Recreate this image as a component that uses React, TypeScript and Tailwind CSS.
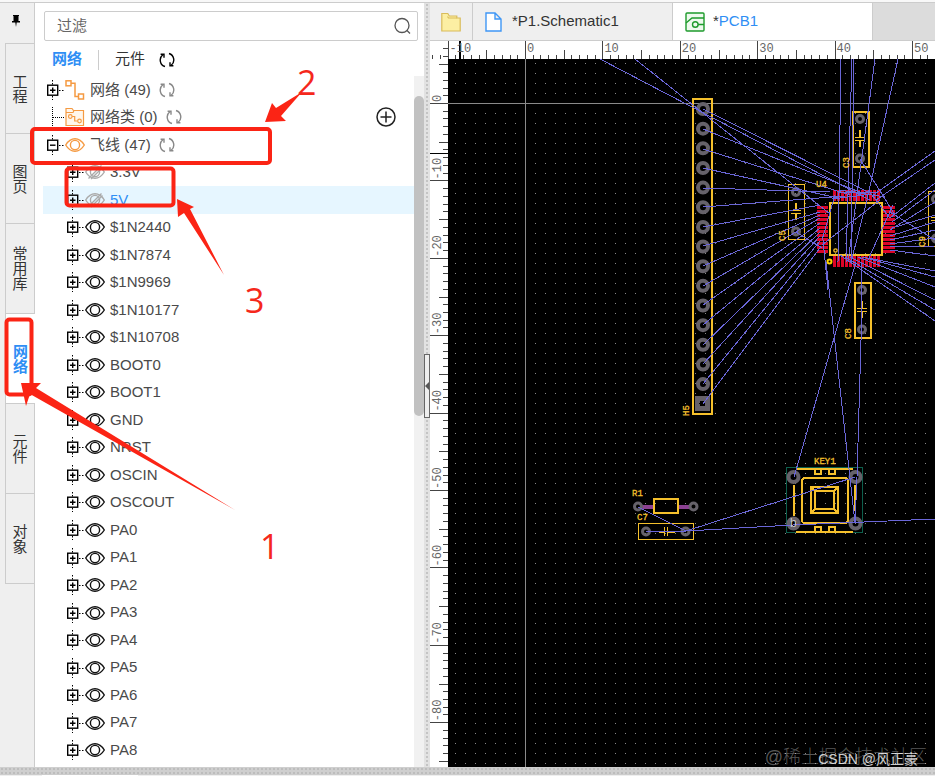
import { useState } from 'react';
import { clsx } from 'clsx';

type NodeIcon = 'net' | 'netClass' | 'ratline' | 'shown' | 'hidden';

interface TreeNode {
  label: string;
  icon: NodeIcon;
  level: 1 | 2;
  expander: 'plus' | 'minus' | 'none';
  refresh?: boolean;
  add?: boolean;
}

const SIDE_TABS = ['工程', '图页', '常用库', '网络', '元件', '对象'];

const HIDDEN_NETS = ['3.3V', '5V'];

const NETS = [
  '3.3V', '5V', '$1N2440', '$1N7874', '$1N9969', '$1N10177', '$1N10708',
  'BOOT0', 'BOOT1', 'GND', 'NRST', 'OSCIN', 'OSCOUT',
  'PA0', 'PA1', 'PA2', 'PA3', 'PA4', 'PA5', 'PA6', 'PA7', 'PA8',
];

const NODES: TreeNode[] = [
  { label: '网络 (49)', icon: 'net', level: 1, expander: 'plus', refresh: true },
  { label: '网络类 (0)', icon: 'netClass', level: 1, expander: 'none', refresh: true, add: true },
  { label: '飞线 (47)', icon: 'ratline', level: 1, expander: 'minus', refresh: true },
  ...NETS.map((label): TreeNode => ({
    label,
    icon: HIDDEN_NETS.includes(label) ? 'hidden' : 'shown',
    level: 2,
    expander: 'plus',
  })),
];

export default function App() {
  return (
    <div className="relative flex h-screen flex-col overflow-hidden bg-white font-['Liberation_Sans','Noto_Sans_CJK_SC',sans-serif] text-[15px] text-[#4a4a4a]">
      <div className="h-[3px] shrink-0 border-b border-[#ccc] bg-[#f8f8f8]" />
      <main className="flex min-h-0 flex-1">
        <SideTabs />
        <NetPanel />
        <Splitter />
        <Editor />
      </main>
      <div className="h-[7px] shrink-0 bg-[#cfcfcf] bg-[radial-gradient(#bdbdbd_1px,transparent_1px)] bg-[size:4px_4px]" />
      <div className="flex h-0.5 shrink-0 border-t border-[#ccc] bg-[#eee]">
        <div className="ml-[42px] w-24 bg-white" />
      </div>
      <Annotations />
    </div>
  );
}

// ---------------------------------------------------------------------------
// Left side
// ---------------------------------------------------------------------------

function SideTabs() {
  const [active, setActive] = useState('网络');

  return (
    <nav className="flex w-[35px] shrink-0 flex-col border-r border-[#ccc] bg-[#efefef] text-[#333]">
      <button type="button" aria-label="Pin" className="flex h-10 items-center justify-center pr-0.5 pb-1">
        <svg width="8" height="12" viewBox="0 0 8 12">
          <path d="M1 0h6v1H6.500v5H8v1.500H4.700L4 12l-.7-4.500H0V6h1.500V1H1z" fill="#000" />
        </svg>
      </button>
      {SIDE_TABS.map((tab) => (
        <button
          key={tab}
          type="button"
          onClick={() => setActive(tab)}
          className={clsx(
            'ml-[5px] flex h-[90px] items-center justify-center border-t border-l border-[#ccc]',
            tab === active && '-mr-px bg-white font-bold text-[#2f8ef4]',
          )}
        >
          <span className="w-[15px] leading-[15px] break-all">{tab}</span>
        </button>
      ))}
      <div className="ml-[5px] border-t border-[#ccc]" />
    </nav>
  );
}

function NetPanel() {
  const [selected, setSelected] = useState('5V');

  return (
    <section className="flex w-[389px] shrink-0 flex-col">
      <label className="mt-2 mr-[6px] ml-[9px] flex h-[30px] shrink-0 items-center rounded-xs border border-[#ccc] px-3">
        <input
          aria-label="过滤"
          placeholder="过滤"
          className="min-w-0 flex-1 outline-none placeholder:text-[#666]"
        />
        <svg width="18" height="18" viewBox="0 0 18 18" fill="none" stroke="#555" strokeWidth="1.300" className="-mr-1.5">
          <circle cx="9" cy="8.500" r="7" />
          <path d="M14 13.500l3 3" />
        </svg>
      </label>

      <div className="flex h-[35px] shrink-0 items-center px-[17px] pt-0.5">
        <button type="button" className="font-bold text-[#2f8ef4]">网络</button>
        <span className="mx-4 h-5 w-px bg-[#ccc]" />
        <button type="button" className="text-[#333]">元件</button>
        <button type="button" aria-label="Refresh" className="ml-3.5 text-black">
          <RefreshIcon />
        </button>
      </div>

      <div className="flex min-h-0 flex-1">
        <ul className="flex min-w-0 flex-1 flex-col pb-[3px] pl-2">
          {NODES.map((node) => (
            <TreeRow
              key={node.label}
              node={node}
              selected={node.label === selected}
              onSelect={() => setSelected(node.label)}
            />
          ))}
        </ul>
        <div className="w-2.5 bg-[#f1f1f1] pt-5">
          <div className="h-80 rounded-full bg-[#c1c1c1]" />
        </div>
      </div>
    </section>
  );
}

interface TreeRowProps {
  node: TreeNode;
  selected: boolean;
  onSelect: () => void;
}

function TreeRow({ node, selected, onSelect }: TreeRowProps) {
  return (
    <li
      className={clsx(
        'flex min-h-0 flex-1 items-center pr-[18px]',
        node.level === 1 ? 'pl-1' : 'pl-6',
        selected && 'bg-[#e6f6ff]',
      )}
    >
      <button type="button" aria-label={`Toggle ${node.label}`}>
        <Expander kind={node.expander} />
      </button>
      <NodeGlyph icon={node.icon} />
      <button
        type="button"
        onClick={onSelect}
        className={clsx('ml-[5px] whitespace-nowrap', selected && 'text-[#2f8ef4]')}
      >
        {node.label}
      </button>
      {node.refresh && (
        <button type="button" aria-label={`Refresh ${node.label}`} className="ml-2 text-[#888]">
          <RefreshIcon />
        </button>
      )}
      {node.add && (
        <button type="button" aria-label="Add" className="ml-auto">
          <svg width="20" height="20" viewBox="0 0 20 20" fill="none" stroke="#222" strokeWidth="1.500">
            <circle cx="10" cy="10" r="9" />
            <path d="M10 4.500v11M4.500 10h11" />
          </svg>
        </button>
      )}
    </li>
  );
}

function Expander({ kind }: { kind: TreeNode['expander'] }) {
  return (
    <svg width="18" height="26" viewBox="0 0 18 26" fill="none" stroke="#000" className="block">
      {kind === 'none' ? (
        <path d="M5.500 3v20M6 13.500h12" strokeDasharray="1 1" />
      ) : (
        <>
          <path d="M5.500 3v5M5.500 19v4M12 13.500h6" strokeDasharray="1.500 1.500" />
          <rect x=".7" y="8.200" width="10" height="10" strokeWidth="1.400" />
          <path d={kind === 'plus' ? 'M3 13.200h5.500M5.700 10.500v5.500' : 'M3 13.200h5.500'} strokeWidth="1.400" />
        </>
      )}
    </svg>
  );
}

function RefreshIcon() {
  return (
    <svg width="16" height="16" viewBox="0 0 16 16" fill="none" stroke="currentColor" strokeWidth="1.400" className="block">
      <path d="M6 14.500A6.800 6.800 0 0 1 3.800 2.700M1.600 2.300h3.400v3.400" />
      <path d="M10 1.500A6.800 6.800 0 0 1 12.200 13.300M14.400 13.700H11v-3.400" />
    </svg>
  );
}

function NodeGlyph({ icon }: { icon: NodeIcon }) {
  if (icon === 'net') {
    return (
      <svg width="20" height="20" viewBox="0 0 20 20" fill="none" stroke="#f59a42" strokeWidth="1.500">
        <rect x="1" y=".8" width="5" height="5" />
        <rect x="13.500" y="14" width="5" height="5" />
        <path d="M6 3.200h4v13.300h3.500" />
      </svg>
    );
  }
  if (icon === 'netClass') {
    return (
      <svg width="20" height="20" viewBox="0 0 20 20" fill="#fff6ec" stroke="#f59a42" strokeWidth="1.200">
        <path d="M1 18.500V1.500h6l1.500 2h10v15zM1 5.500h7l1-2" />
        <circle cx="5.300" cy="9.500" r="1.800" />
        <circle cx="14.500" cy="14" r="1.800" />
        <path d="M7.200 9.500h2.500v4.500h3" fill="none" />
      </svg>
    );
  }
  const color = { ratline: '#f59a42', shown: '#111', hidden: '#aaa' }[icon];
  return (
    <svg width="20" height="20" viewBox="0 0 20 20" fill="none" stroke={color} strokeWidth="1.400">
      <path d="M.7 10Q4.500 3.700 10 3.700T19.300 10Q15.500 16.300 10 16.300T.7 10z" />
      <circle cx="10" cy="10" r="4.600" />
      {icon === 'hidden' && <path d="M3.500 16.500L16.500 3.500M6 17L17.500 5.500" />}
    </svg>
  );
}

function Splitter() {
  return (
    <div className="flex w-1.5 shrink-0 flex-col bg-[#e2e2e2] bg-[radial-gradient(#c4c4c4_1px,transparent_1px)] bg-[size:6px_4px] pt-[351px]">
      <button
        type="button"
        aria-label="Collapse panel"
        className="flex h-16 items-center justify-end border border-[#666] bg-[#eee]"
      >
        <svg width="4" height="8" viewBox="0 0 4 8">
          <path d="M4 0v8L0 4z" fill="#555" />
        </svg>
      </button>
    </div>
  );
}

// ---------------------------------------------------------------------------
// Editor
// ---------------------------------------------------------------------------

function Editor() {
  return (
    <section className="flex min-w-0 flex-1 flex-col">
      <div className="flex h-[38px] shrink-0 border-b border-[#ccc] bg-[#dcdcdc] text-[#333]">
        <button type="button" aria-label="Files" className="flex w-[43px] items-center justify-center border-r border-[#ccc] bg-[#efefef]">
          <svg width="20" height="20" viewBox="0 0 20 20" fill="#fcefa3" stroke="#d9bc5a" strokeWidth="1.200">
            <path d="M.8 19V1.500h6l1.500 2.500h7.500v2h3.400v13z" />
            <path d="M15.800 6H7.500L6.500 4.500" fill="none" />
          </svg>
        </button>
        <button type="button" className="flex w-[200px] items-center gap-2.5 border-r border-[#ccc] bg-[#efefef] pl-3">
          <svg width="17" height="20" viewBox="0 0 17 20" fill="#fff" stroke="#3f97f6" strokeWidth="1.400">
            <path d="M1 1h9l6 6v12H1zM10 1v6h6" />
          </svg>
          *P1.Schematic1
        </button>
        <button type="button" className="flex w-[200px] items-center gap-2 border-r border-[#ccc] bg-white pl-3">
          <svg width="20" height="20" viewBox="0 0 20 20" fill="#eefaee" stroke="#1e9b2c" strokeWidth="1.400">
            <rect x="1" y="1" width="18" height="18" rx="1" />
            <path d="M1 11l6-5h12M13 12.500h6" fill="none" />
            <circle cx="10.300" cy="12.500" r="2.800" />
          </svg>
          <span>*<span className="text-[#2f8ef4]">PCB1</span></span>
        </button>
      </div>
      <TopRuler />
      <div className="flex min-h-0 flex-1">
        <LeftRuler />
        <div className="relative flex min-w-0 flex-1 overflow-hidden bg-black">
          <Board />
          <div className="absolute right-2 bottom-0 text-[18px] leading-5 font-light text-white/35">@稀土掘金技术社区</div>
          <div className="absolute right-[17px] bottom-0 text-[14px] leading-4 text-white/80">CSDN @风正豪</div>
        </div>
      </div>
    </section>
  );
}

// Distance in pixels between two ruler units.
const UNIT = 7.74;

const range = (from: number, to: number) =>
  Array.from({ length: to - from + 1 }, (_, i) => from + i);

function TopRuler() {
  return (
    <svg height="18" className="w-full shrink-0 bg-white" stroke="#444">
      {range(-12, 120).map((n) => {
        const x = Math.round(95 + n * UNIT) + 0.5;
        const top = n % 10 === 0 ? 0 : n % 5 === 0 ? 9 : 14;
        return <line key={n} x1={x} x2={x} y1={top} y2="18" />;
      })}
      <path d="M13 7.500h5M13 15.500h5" />
      <path d="M30 0v18" stroke="#000" strokeWidth="2" />
      {range(-1, 5).map((n) => (
        <text key={n} x={97 + n * 10 * UNIT} y="11" fill="#666" stroke="none" className="font-['Liberation_Mono',monospace] text-[12px]">
          {n * 10}
        </text>
      ))}
    </svg>
  );
}

function LeftRuler() {
  return (
    <svg width="18" className="shrink-0 bg-white" stroke="#444">
      {range(-5, 120).map((n) => {
        const y = Math.round(44 + n * UNIT) + 0.5;
        const left = n % 10 === 0 ? 0 : n % 5 === 0 ? 9 : 13;
        return <line key={n} x1={left} x2="18" y1={y} y2={y} />;
      })}
      <path d="M0 94.500h18" stroke="#000" />
      {range(0, 8).map((n) => (
        <text
          key={n}
          transform={`translate(11 ${43 + n * 10 * UNIT}) rotate(-90)`}
          fill="#666"
          stroke="none"
          className="font-['Liberation_Mono',monospace] text-[12px]"
        >
          {n === 0 ? '0' : `-${n * 10}`}
        </text>
      ))}
    </svg>
  );
}

// ---------------------------------------------------------------------------
// PCB drawing
// ---------------------------------------------------------------------------

const SILK = '#f5c02c';

type Line = [number, number, number, number];

const RATLINES: Line[] = [
  // connector H5 to the chip
  [600, 59, 870, 200], [635, 59, 830, 214],
  [703, 109, 868, 192], [703, 129, 862, 193], [703, 149, 850, 195], [703, 168, 838, 198],
  [703, 188, 830, 192], [703, 207, 845, 196], [703, 227, 820, 205], [703, 246, 820, 212],
  [703, 266, 820, 215], [703, 286, 820, 218], [703, 305, 820, 223], [703, 325, 820, 228],
  [703, 345, 820, 232], [703, 364, 820, 236], [703, 384, 820, 241], [703, 404, 820, 248],
  // leaving through the top edge
  [841, 59, 838, 262], [852, 59, 846, 262], [854, 59, 851, 262], [875, 59, 848, 262], [898, 59, 867, 200],
  // across the chip
  [867, 200, 851, 262], [893, 205, 868, 260], [822, 245, 880, 200], [835, 195, 822, 240], [840, 190, 885, 197],
  [838, 193, 878, 192], [832, 199, 872, 194], [860, 159, 895, 215], [796, 232, 822, 248], [868, 190, 890, 218],
  // right hand fan
  [872, 196, 935, 151], [876, 200, 935, 160], [890, 218, 935, 183], [892, 222, 935, 190], [890, 230, 935, 202],
  [890, 212, 935, 240], [892, 228, 935, 215], [890, 236, 935, 222], [890, 240, 935, 230], [890, 244, 935, 238],
  [890, 247, 935, 246], [890, 250, 935, 256], [862, 257, 935, 271], [866, 258, 935, 277], [858, 257, 935, 287],
  [850, 257, 935, 300], [845, 257, 935, 310], [840, 255, 935, 321],
  // down to the key and the passive parts
  [823, 240, 828, 290], [826, 262, 855, 523], [856, 262, 832, 345], [832, 345, 794, 477],
  [861, 262, 861, 340], [861, 340, 857, 477], [857, 477, 855, 523],
  [638, 507, 686, 531], [646, 531, 686, 531], [686, 531, 855, 477], [686, 531, 793, 525], [793, 525, 935, 519],
];

/** Board content, drawn in window coordinates and shifted to the canvas origin. */
function Board() {
  return (
    <svg className="min-w-0 flex-1" fill="none" shapeRendering="crispEdges">
      <defs>
        <pattern id="grid" x="7" y="4" width="10" height="10" patternUnits="userSpaceOnUse">
          <rect width="1" height="1" fill="#888" />
        </pattern>
      </defs>
      <rect width="100%" height="100%" fill="url(#grid)" />
      <path d="M77.500 0V2000M0 44.500H3000" stroke="#8a8a8a" />
      <g transform="translate(-448 -59)">
        <Chip />
        <Header />
        <Capacitor x={852} y={111} />
        <Capacitor x={788} y={184} thin />
        <Capacitor x={854} y={282} />
        <Capacitor x={928} y={191} thin />
        <Passives />
        <KeySwitch />
        <g stroke="#6a66d8">
          {RATLINES.map(([x1, y1, x2, y2], i) => (
            <line key={i} x1={x1} y1={y1} x2={x2} y2={y2} />
          ))}
        </g>
        <g fill={SILK} stroke={SILK} strokeWidth=".3" className="font-['Liberation_Mono',monospace] text-[9px]">
          <text transform="translate(849 168) rotate(-90)">C3</text>
          <text transform="translate(785 241) rotate(-90)">C5</text>
          <text transform="translate(851 339) rotate(-90)">C8</text>
          <text transform="translate(925 247) rotate(-90)">C9</text>
          <text transform="translate(689 416) rotate(-90)">H5</text>
          <text x="816" y="187">U4</text>
          <text x="632" y="496">R1</text>
          <text x="637" y="520">C7</text>
          <text x="814" y="464">KEY1</text>
        </g>
        <text x="790" y="527" fill="#ccc" className="font-['Liberation_Sans',sans-serif] text-[12px]">b</text>
      </g>
    </svg>
  );
}

function Pad({ x, y, r = 4 }: { x: number; y: number; r?: number }) {
  return <circle cx={x} cy={y} r={r} stroke="#66626a" strokeWidth={r > 4 ? 4 : 3} shapeRendering="auto" />;
}

function Chip() {
  return (
    <>
      <g stroke="#dd0428" strokeWidth="3">
        {range(0, 11).map((i) => (
          <path
            key={i}
            d={`M${834.500 + i * 4} 190v11M${834.500 + i * 4} 256v11M817 ${207 + i * 4}h11M883 ${207 + i * 4}h12`}
          />
        ))}
      </g>
      <rect x="830" y="203" width="52" height="52" stroke={SILK} strokeWidth="2" />
      <circle cx="835.500" cy="250.500" r="1.700" stroke={SILK} strokeWidth="1.300" shapeRendering="auto" />
      <circle cx="829.500" cy="261.500" r="2" stroke="#ffd400" strokeWidth="2" shapeRendering="auto" />
    </>
  );
}

function Header() {
  return (
    <>
      <rect x="693" y="99" width="19" height="315" stroke={SILK} strokeWidth="2" />
      {range(0, 14).map((i) => (
        <Pad key={i} x={703} y={109 + i * 19.650} r={5} />
      ))}
      <rect x="695" y="396" width="15" height="15" fill="#66626a" />
      <circle cx="702.500" cy="403.500" r="3" fill="#000" />
    </>
  );
}

function Capacitor({ x, y, thin = false }: { x: number; y: number; thin?: boolean }) {
  return (
    <g transform={`translate(${x} ${y})`}>
      <rect x=".5" y=".5" width="16" height="55" stroke={SILK} strokeWidth={thin ? 1 : 2} />
      <Pad x={8} y={8} r={3.500} />
      <Pad x={8} y={47.500} r={3.500} />
      <path d="M8 19v7M8 29v7M3 26.500h10M3 29.500h10" stroke={SILK} strokeWidth="1.500" />
    </g>
  );
}

function Passives() {
  return (
    <>
      <path d="M641 506.500h12M679 506.500h12" stroke="#8b4192" strokeWidth="4" />
      <rect x="654" y="499" width="24" height="14" stroke={SILK} strokeWidth="2" />
      <Pad x={638} y={506.500} r={3.500} />
      <Pad x={693.500} y={506.500} r={3.500} />
      <rect x="638.500" y="523.500" width="55" height="16" stroke={SILK} />
      <Pad x={646} y={531.500} r={3.500} />
      <Pad x={685.500} y={531.500} r={3.500} />
      <path d="M659 532h5.500M668 532h7M664.500 527v9M667.500 527v9" stroke={SILK} strokeWidth="1.500" />
    </>
  );
}

function KeySwitch() {
  return (
    <>
      <rect x="786.500" y="467.500" width="76" height="65" stroke="#0d5f4c" />
      <g stroke={SILK} strokeWidth="2">
        <path d="M796 469h57M796 532h57M794 485v31M855 485v26" />
        <path d="M815 470v4h6v-4M829 470v4h6v-4M815 531v-4h6v4M829 531v-4h6v4" />
        <rect x="802" y="478" width="46" height="45" rx="3" />
        <rect x="811" y="487" width="27" height="26" />
        <rect x="815" y="491" width="19" height="18" />
        <path d="M811 487l4 4M838 487l-4 4M811 513l4-4M838 513l-4-4" />
      </g>
      <Pad x={793.500} y={477} r={5} />
      <Pad x={855.500} y={477} r={5} />
      <Pad x={793.500} y={523.500} r={5} />
      <Pad x={855.500} y={523.500} r={5} />
    </>
  );
}

// ---------------------------------------------------------------------------
// Tutorial marks over the window
// ---------------------------------------------------------------------------

function Annotations() {
  return (
    <svg className="pointer-events-none absolute inset-0 h-full w-full" fill="none">
      <g stroke="#fb2415" strokeWidth="4">
        <rect x="32" y="129" width="238" height="34" rx="3" />
        <rect x="66.500" y="168.500" width="107" height="37" rx="3" />
        <rect x="6.500" y="319.500" width="25" height="75" rx="3" />
      </g>
      <g fill="#fb2415">
        <path d="M302 92L281 116L286 121L265 122L272 103L276 108z" />
        <path d="M224 275L184 213L178 217L177 199L194 207L190 209z" />
        <path d="M235 510L30 394L26 406L21 383L41 383L36 388z" />
      </g>
      <g fill="#f5281c" className="font-['Open_Sans',sans-serif] text-[34px]">
        <text x="297" y="95">2</text>
        <text x="245" y="313">3</text>
        <text x="260" y="559">1</text>
      </g>
    </svg>
  );
}
